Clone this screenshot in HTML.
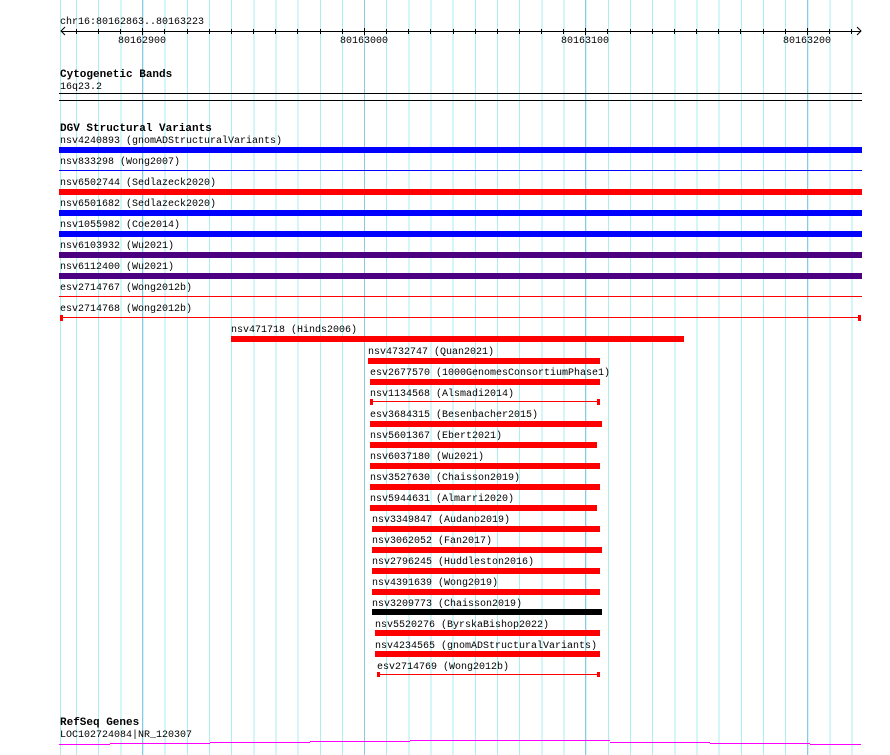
<!DOCTYPE html>
<html><head><meta charset="utf-8"><style>
body{margin:0;width:890px;height:755px;background:#fff;position:relative;overflow:hidden;font-family:"Liberation Mono","DejaVu Sans Mono",monospace;font-size:10px;color:#000}
div{position:absolute}
.g{top:0;height:755px;width:1px;background:#aaeef2}
.m{top:0;height:755px;width:1px;background:#8cc8e6}
.t{white-space:pre;line-height:12px;margin-top:2px}
.b{font-weight:bold;font-size:11px}
</style></head><body>
<div style="left:76px;top:0;width:790px;height:755px;background:repeating-linear-gradient(90deg,#aaeef2 0 1px,transparent 1px 22.16px)"></div>
<div class="m" style="left:142px"></div><div class="m" style="left:364px"></div><div class="m" style="left:585px"></div><div class="m" style="left:807px"></div>
<div class="g" style="left:60px"></div>

<div class="t" style="left:60px;top:15px">chr16:80162863..80163223</div>
<div style="left:61px;top:31px;width:800px;height:1px;background:#000"></div>
<svg style="position:absolute;left:0;top:0" width="890" height="60">
<path d="M65 27 L61 31 L65 35 M857 27 L861 31 L857 35" stroke="#000" fill="none"/>
</svg>
<svg style="position:absolute;left:0;top:0" width="890" height="60"><g stroke="#000" stroke-width="1">
<line x1="76.5" y1="29" x2="76.5" y2="34"/><line x1="98.5" y1="29" x2="98.5" y2="34"/><line x1="120.5" y1="29" x2="120.5" y2="34"/><line x1="142.5" y1="28" x2="142.5" y2="35"/>
<line x1="164.5" y1="29" x2="164.5" y2="34"/><line x1="187.5" y1="29" x2="187.5" y2="34"/><line x1="209.5" y1="29" x2="209.5" y2="34"/><line x1="231.5" y1="29" x2="231.5" y2="34"/><line x1="253.5" y1="29" x2="253.5" y2="34"/><line x1="275.5" y1="29" x2="275.5" y2="34"/><line x1="297.5" y1="29" x2="297.5" y2="34"/><line x1="320.5" y1="29" x2="320.5" y2="34"/><line x1="342.5" y1="29" x2="342.5" y2="34"/><line x1="364.5" y1="28" x2="364.5" y2="35"/>
<line x1="386.5" y1="29" x2="386.5" y2="34"/><line x1="408.5" y1="29" x2="408.5" y2="34"/><line x1="430.5" y1="29" x2="430.5" y2="34"/><line x1="453.5" y1="29" x2="453.5" y2="34"/><line x1="475.5" y1="29" x2="475.5" y2="34"/><line x1="497.5" y1="29" x2="497.5" y2="34"/><line x1="519.5" y1="29" x2="519.5" y2="34"/><line x1="541.5" y1="29" x2="541.5" y2="34"/><line x1="563.5" y1="29" x2="563.5" y2="34"/><line x1="585.5" y1="28" x2="585.5" y2="35"/>
<line x1="607.5" y1="29" x2="607.5" y2="34"/><line x1="630.5" y1="29" x2="630.5" y2="34"/><line x1="652.5" y1="29" x2="652.5" y2="34"/><line x1="674.5" y1="29" x2="674.5" y2="34"/><line x1="696.5" y1="29" x2="696.5" y2="34"/><line x1="718.5" y1="29" x2="718.5" y2="34"/><line x1="740.5" y1="29" x2="740.5" y2="34"/><line x1="763.5" y1="29" x2="763.5" y2="34"/><line x1="785.5" y1="29" x2="785.5" y2="34"/><line x1="807.5" y1="28" x2="807.5" y2="35"/><line x1="829.5" y1="29" x2="829.5" y2="34"/><line x1="851.5" y1="29" x2="851.5" y2="34"/>
</g></svg>
<div class="t" style="left:118px;top:34px">80162900</div>
<div class="t" style="left:340px;top:34px">80163000</div>
<div class="t" style="left:561px;top:34px">80163100</div>
<div class="t" style="left:783px;top:34px">80163200</div>

<div class="t b" style="left:60px;top:67px">Cytogenetic Bands</div>
<div class="t" style="left:60px;top:80px">16q23.2</div>
<div style="left:59px;top:93px;width:803px;height:1px;background:#000"></div>
<div style="left:59px;top:100px;width:803px;height:1px;background:#000"></div>

<div class="t b" style="left:60px;top:121px">DGV Structural Variants</div>
<div class="t" style="left:60px;top:134px">nsv4240893 (gnomADStructuralVariants)</div>
<div style="left:59px;top:147px;width:803px;height:6px;background:#0000ff"></div>
<div class="t" style="left:60px;top:155px">nsv833298 (Wong2007)</div>
<div style="left:59px;top:170px;width:803px;height:1px;background:#0000ff"></div>
<div class="t" style="left:60px;top:176px">nsv6502744 (Sedlazeck2020)</div>
<div style="left:59px;top:189px;width:803px;height:6px;background:#ff0000"></div>
<div class="t" style="left:60px;top:197px">nsv6501682 (Sedlazeck2020)</div>
<div style="left:59px;top:210px;width:803px;height:6px;background:#0000ff"></div>
<div class="t" style="left:60px;top:218px">nsv1055982 (Coe2014)</div>
<div style="left:59px;top:231px;width:803px;height:6px;background:#0000ff"></div>
<div class="t" style="left:60px;top:239px">nsv6103932 (Wu2021)</div>
<div style="left:59px;top:252px;width:803px;height:6px;background:#4b0082"></div>
<div class="t" style="left:60px;top:260px">nsv6112400 (Wu2021)</div>
<div style="left:59px;top:273px;width:803px;height:6px;background:#4b0082"></div>
<div class="t" style="left:60px;top:281px">esv2714767 (Wong2012b)</div>
<div style="left:59px;top:296px;width:803px;height:1px;background:#ff0000"></div>
<div class="t" style="left:60px;top:302px">esv2714768 (Wong2012b)</div>
<div style="left:60px;top:317px;width:801px;height:1px;background:#ff0000"></div>
<div style="left:60px;top:315px;width:3px;height:6px;background:#ff0000"></div>
<div style="left:858px;top:315px;width:3px;height:6px;background:#ff0000"></div>

<div class="t" style="left:231px;top:323px">nsv471718 (Hinds2006)</div>
<div style="left:231px;top:336px;width:453px;height:6px;background:#ff0000"></div>

<div class="t" style="left:368px;top:345px">nsv4732747 (Quan2021)</div>
<div style="left:368px;top:358px;width:232px;height:6px;background:#ff0000"></div>
<div class="t" style="left:370px;top:366px">esv2677570 (1000GenomesConsortiumPhase1)</div>
<div style="left:370px;top:379px;width:230px;height:6px;background:#ff0000"></div>
<div class="t" style="left:370px;top:387px">nsv1134568 (Alsmadi2014)</div>
<div style="left:370px;top:401px;width:230px;height:1px;background:#ff0000"></div>
<div style="left:370px;top:399px;width:3px;height:6px;background:#ff0000"></div>
<div style="left:597px;top:399px;width:3px;height:6px;background:#ff0000"></div>
<div class="t" style="left:370px;top:408px">esv3684315 (Besenbacher2015)</div>
<div style="left:370px;top:421px;width:232px;height:6px;background:#ff0000"></div>
<div class="t" style="left:370px;top:429px">nsv5601367 (Ebert2021)</div>
<div style="left:370px;top:442px;width:227px;height:6px;background:#ff0000"></div>
<div class="t" style="left:370px;top:450px">nsv6037180 (Wu2021)</div>
<div style="left:370px;top:463px;width:230px;height:6px;background:#ff0000"></div>
<div class="t" style="left:370px;top:471px">nsv3527630 (Chaisson2019)</div>
<div style="left:370px;top:484px;width:230px;height:6px;background:#ff0000"></div>
<div class="t" style="left:370px;top:492px">nsv5944631 (Almarri2020)</div>
<div style="left:370px;top:505px;width:227px;height:6px;background:#ff0000"></div>
<div class="t" style="left:372px;top:513px">nsv3349847 (Audano2019)</div>
<div style="left:372px;top:526px;width:228px;height:6px;background:#ff0000"></div>
<div class="t" style="left:372px;top:534px">nsv3062052 (Fan2017)</div>
<div style="left:372px;top:547px;width:230px;height:6px;background:#ff0000"></div>
<div class="t" style="left:372px;top:555px">nsv2796245 (Huddleston2016)</div>
<div style="left:372px;top:568px;width:228px;height:6px;background:#ff0000"></div>
<div class="t" style="left:372px;top:576px">nsv4391639 (Wong2019)</div>
<div style="left:372px;top:589px;width:228px;height:6px;background:#ff0000"></div>
<div class="t" style="left:372px;top:597px">nsv3209773 (Chaisson2019)</div>
<div style="left:372px;top:609px;width:230px;height:6px;background:#000"></div>
<div class="t" style="left:375px;top:618px">nsv5520276 (ByrskaBishop2022)</div>
<div style="left:375px;top:630px;width:225px;height:6px;background:#ff0000"></div>
<div class="t" style="left:375px;top:639px">nsv4234565 (gnomADStructuralVariants)</div>
<div style="left:375px;top:651px;width:225px;height:6px;background:#ff0000"></div>
<div class="t" style="left:377px;top:660px">esv2714769 (Wong2012b)</div>
<div style="left:377px;top:674px;width:223px;height:1px;background:#ff0000"></div>
<div style="left:377px;top:672px;width:3px;height:5px;background:#ff0000"></div>
<div style="left:597px;top:672px;width:3px;height:5px;background:#ff0000"></div>

<div class="t b" style="left:60px;top:715px">RefSeq Genes</div>
<div class="t" style="left:60px;top:728px">LOC102724084|NR_120307</div>
<div style="left:59px;top:744px;width:51px;height:1px;background:#ff00ff"></div>
<div style="left:110px;top:743px;width:100px;height:1px;background:#ff00ff"></div>
<div style="left:210px;top:742px;width:100px;height:1px;background:#ff00ff"></div>
<div style="left:310px;top:741px;width:100px;height:1px;background:#ff00ff"></div>
<div style="left:410px;top:740px;width:200px;height:1px;background:#ff00ff"></div>
<div style="left:610px;top:742px;width:100px;height:1px;background:#ff00ff"></div>
<div style="left:710px;top:743px;width:100px;height:1px;background:#ff00ff"></div>
<div style="left:810px;top:744px;width:51px;height:1px;background:#ff00ff"></div>
</body></html>
